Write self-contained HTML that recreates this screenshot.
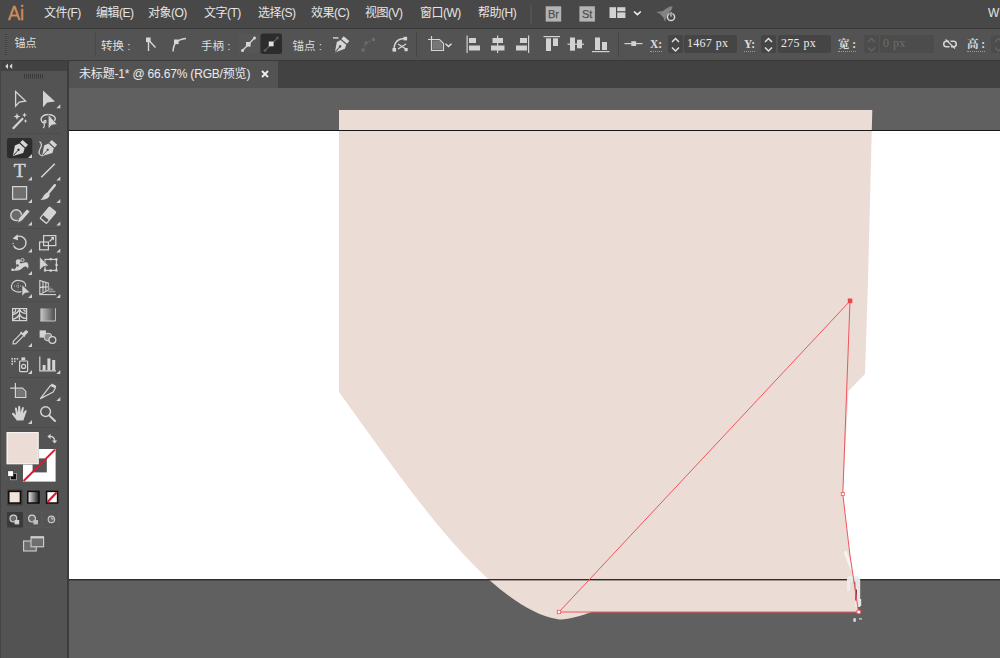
<!DOCTYPE html>
<html lang="zh-CN">
<head>
<meta charset="utf-8">
<title>Ai</title>
<style>
*{box-sizing:border-box;margin:0;padding:0}
html,body{width:1000px;height:658px;overflow:hidden;background:#535353}
body{position:relative;font-family:"Liberation Sans","Noto Sans CJK SC",sans-serif;font-size:12px;color:#e0e0e0}
svg{display:block;overflow:hidden}
#menubar{position:absolute;left:0;top:0;width:1000px;height:28px;background:#484848}
#menubar .mi{position:absolute;top:0;height:28px;line-height:27px;font-size:12px;color:#e4e4e4;white-space:nowrap;letter-spacing:-0.5px}
#menuline{position:absolute;left:0;top:28px;width:1000px;height:1px;background:#383838}
#ctrl{position:absolute;left:0;top:29px;width:1000px;height:31px;background:#535353}
#ctrl .t{position:absolute;top:0;height:30px;line-height:29px;font-size:12px;color:#dedede;white-space:nowrap}
#ctrl .lb{position:absolute;top:8px;height:15px;line-height:14px;font-size:11.5px;font-weight:bold;color:#dedede;white-space:nowrap;font-family:"Liberation Serif","Noto Serif CJK SC",serif;border-bottom:1px dotted #9a9a9a}
#ctrl .inp{position:absolute;top:6px;height:18px;background:#454545;border-radius:2px;font-family:"Liberation Serif",serif;font-size:12px;letter-spacing:0.25px;word-spacing:0.5px;line-height:17px;color:#ececec;padding-left:3px;white-space:nowrap}
#ctrl .spin{position:absolute;top:6px;height:18px;width:15px;background:#454545;border-radius:2px}
#ctrlline{position:absolute;left:0;top:60px;width:1000px;height:1px;background:#3a3a3a}
#tabbar{position:absolute;left:68px;top:61px;width:932px;height:27px;background:#424242}
#tab{position:absolute;left:1px;top:0;width:209px;height:27px;background:#535353;font-size:12px;line-height:26px;color:#ececec;white-space:nowrap;letter-spacing:-0.18px}
#canvas{position:absolute;left:69px;top:88px;width:931px;height:570px;background:#606060;overflow:hidden}
#tools{position:absolute;left:0;top:61px;width:69px;height:597px;background:#535353;border-left:1px solid #454545;border-right:2px solid #3c3c3c}
</style>
</head>
<body>
<div id="menubar">
  <div class="mi" style="left:8px;font-size:20px;color:#cf8d5c;letter-spacing:-0.2px;line-height:26px;-webkit-text-stroke:0.35px #cf8d5c;transform:scaleX(0.92);transform-origin:0 0">Ai</div>
  <div class="mi" style="left:44px">文件(F)</div>
  <div class="mi" style="left:96px">编辑(E)</div>
  <div class="mi" style="left:148px">对象(O)</div>
  <div class="mi" style="left:204px">文字(T)</div>
  <div class="mi" style="left:258px">选择(S)</div>
  <div class="mi" style="left:311px">效果(C)</div>
  <div class="mi" style="left:365px">视图(V)</div>
  <div class="mi" style="left:420px">窗口(W)</div>
  <div class="mi" style="left:478px">帮助(H)</div>
  <div class="mi" style="left:988px">W</div>
  <svg width="1000" height="28" viewBox="0 0 1000 28" style="position:absolute;left:0;top:0">
    <rect x="530.5" y="5" width="1" height="19" fill="#5c5c5c"/>
    <rect x="545.7" y="6.3" width="15.5" height="15.3" fill="#b4b4b4"/>
    <text x="553.5" y="18" font-family="Liberation Sans, sans-serif" font-size="11" fill="#505050" stroke="#505050" stroke-width="0.25" text-anchor="middle">Br</text>
    <rect x="579.4" y="6.3" width="15.5" height="15.3" fill="#b4b4b4"/>
    <text x="587.2" y="18" font-family="Liberation Sans, sans-serif" font-size="11" fill="#505050" stroke="#505050" stroke-width="0.25" text-anchor="middle">St</text>
    <rect x="609.5" y="7.2" width="6.5" height="10.8" fill="#d2d2d2"/>
    <rect x="617.2" y="7.2" width="8.2" height="4" fill="#d2d2d2"/>
    <rect x="617.2" y="12.4" width="8.2" height="5.6" fill="#d2d2d2"/>
    <path d="M634 11.5 L637.4 14.6 L640.8 11.5" fill="none" stroke="#f0f0f0" stroke-width="1.6"/>
    <g transform="translate(665.5,12.5) rotate(48)" fill="#848484"><path d="M0 -9.5 C3.2 -6 3.2 1 2.2 5 L-2.2 5 C-3.2 1 -3.2 -6 0 -9.5 Z"/><path d="M-2.6 0.5 L-6.5 6.5 L-2.4 5 Z M2.6 0.5 L6.5 6.5 L2.4 5 Z"/></g>
    <circle cx="671" cy="17" r="3.6" fill="none" stroke="#d8d8d8" stroke-width="1.5"/>
    <rect x="670" y="11.5" width="2" height="5.5" fill="#d8d8d8" stroke="#484848" stroke-width="0.8"/>
  </svg>
</div>
<div id="menuline"></div>
<div id="ctrl">
  <div class="t" style="left:14.5px;font-size:11px;top:0px">锚点</div>
  <div class="t" style="left:101px;font-size:11.5px;top:3px">转换 :</div>
  <div class="t" style="left:201px;font-size:11.5px;top:3px">手柄 :</div>
  <div class="t" style="left:292.5px;font-size:11.5px;top:3px">锚点 :</div>
  <div class="lb" style="left:650px">X:</div>
  <div class="spin" style="left:668px"></div>
  <div class="inp" style="left:684px;width:53px">1467 px</div>
  <div class="lb" style="left:744px">Y:</div>
  <div class="spin" style="left:761px"></div>
  <div class="inp" style="left:778px;width:53px">275 px</div>
  <div class="lb" style="left:838px">宽 :</div>
  <div class="spin" style="left:864px;background:#4c4c4c"></div>
  <div class="inp" style="left:880px;width:54px;background:#4c4c4c;color:#6e6e6e">0 px</div>
  <div class="lb" style="left:967px">高 :</div>
  <div class="spin" style="left:991px;background:#4c4c4c"></div>
  <svg width="1000" height="31" viewBox="0 29 1000 31" style="position:absolute;left:0;top:0">
    <!-- grip -->
    <g fill="#3e3e3e"><rect x="5" y="34" width="2" height="21"/></g>
    <g fill="#5a5a5a"><rect x="5" y="35" width="2" height="1"/><rect x="5" y="37" width="2" height="1"/><rect x="5" y="39" width="2" height="1"/><rect x="5" y="41" width="2" height="1"/><rect x="5" y="43" width="2" height="1"/><rect x="5" y="45" width="2" height="1"/><rect x="5" y="47" width="2" height="1"/><rect x="5" y="49" width="2" height="1"/><rect x="5" y="51" width="2" height="1"/><rect x="5" y="53" width="2" height="1"/></g>
    <rect x="95" y="32" width="1" height="25" fill="#494949"/>
    <!-- convert corner -->
    <g stroke="#d6d6d6" stroke-width="1.4" fill="none">
      <path d="M148.5 40 L148.5 51"/><path d="M148.5 40 L155.5 47.5"/>
    </g>
    <rect x="146" y="37.5" width="4.6" height="4.6" fill="#d6d6d6"/>
    <!-- convert smooth -->
    <path d="M173 51.5 C173.5 44 176 39.5 186 38.5" stroke="#d6d6d6" stroke-width="1.5" fill="none"/>
    <rect x="174" y="39.5" width="4.6" height="4.6" fill="#d6d6d6"/>
    <!-- handle btn 1 -->
    <rect x="238.5" y="34" width="20.5" height="19.5" rx="2" fill="#565656"/>
    <path d="M242.5 50.5 L254.5 38" stroke="#d6d6d6" stroke-width="1.3"/>
    <rect x="246" y="42" width="4.6" height="4.6" fill="#d6d6d6"/>
    <circle cx="242.5" cy="50.5" r="1.5" fill="#d6d6d6"/><circle cx="254.5" cy="38" r="1.5" fill="#d6d6d6"/>
    <!-- handle btn 2 selected -->
    <rect x="260.5" y="33.5" width="21.5" height="20.5" rx="2.5" fill="#2c2c2c"/>
    <path d="M265 50.5 L277.5 38" stroke="#5a5a5a" stroke-width="1.3"/>
    <circle cx="265" cy="50.5" r="1.4" fill="#5a5a5a"/><circle cx="277.5" cy="38" r="1.4" fill="#5a5a5a"/>
    <rect x="268.8" y="41.5" width="4.8" height="4.8" fill="#e0e0e0"/>
    <!-- remove anchor pen -->
    <g transform="translate(341.2,45) rotate(40) scale(1.15)" fill="#d6d6d6">
      <path d="M0 8.5 L-4.6 0.5 L-3.2 -3 L3.2 -3 L4.6 0.5 Z"/>
      <rect x="-3.2" y="-7.2" width="6.4" height="3.2"/>
      <path d="M0 8 L0 2" stroke="#535353" stroke-width="0.9"/><circle cx="0" cy="1.5" r="1.1" fill="#535353"/>
    </g>
    <rect x="333" y="37.2" width="5.5" height="1.4" fill="#d6d6d6"/>
    <!-- disabled -->
    <path d="M363 50 L366 43 L374 39.5" stroke="#6c6c6c" stroke-width="1.2" fill="none" stroke-dasharray="2 1.5"/>
    <rect x="364.5" y="41.5" width="3" height="3" fill="#6c6c6c"/><rect x="372" y="38" width="3" height="3" fill="#6c6c6c"/><rect x="361.5" y="48.5" width="3" height="3" fill="#6c6c6c"/>
    <!-- cut path -->
    <path d="M394 50 C394 42 398 38.5 405 38.5" stroke="#d6d6d6" stroke-width="1.4" fill="none"/>
    <rect x="392.5" y="48" width="3.6" height="3.6" fill="#d6d6d6"/><rect x="403.5" y="36.8" width="3.6" height="3.6" fill="#d6d6d6"/>
    <path d="M398 44 L406 49 M398 49 L406 44" stroke="#d6d6d6" stroke-width="1.3"/>
    <rect x="404.5" y="48" width="3.2" height="3.2" fill="#d6d6d6"/>
    <rect x="416" y="32" width="1" height="25" fill="#464646"/>
    <!-- isolate -->
    <path d="M431.5 36 L431.5 50.5 L443.5 50.5 L443.5 43.5 L439.5 39.5 L428 39.5" stroke="#d6d6d6" stroke-width="1.2" fill="none"/>
    <path d="M432.5 40.5 L439 40.5 L442.5 44 L442.5 49.5 L432.5 49.5 Z" fill="#777"/>
    <path d="M445.5 43.8 L448.5 46.6 L451.5 43.8" stroke="#e2e2e2" stroke-width="1.4" fill="none"/>
    <!-- align left -->
    <g fill="#d2d2d2">
      <rect x="466.5" y="35.5" width="1.2" height="17.5"/><rect x="469" y="38" width="7" height="5"/><rect x="469" y="45.5" width="11" height="5"/>
      <rect x="497" y="35.5" width="1.2" height="17.5"/><rect x="492.5" y="38" width="10.5" height="5"/><rect x="491" y="45.5" width="13.5" height="5"/>
      <rect x="528" y="35.5" width="1.2" height="17.5"/><rect x="520" y="38" width="7" height="5"/><rect x="516" y="45.5" width="11" height="5"/>
      <rect x="543.5" y="36" width="16.5" height="1.2"/><rect x="546" y="38.3" width="5" height="12.7"/><rect x="553" y="38.3" width="5" height="7.7"/>
      <rect x="567.5" y="43.6" width="16.5" height="1.2"/><rect x="570" y="37.5" width="5" height="13.2"/><rect x="577" y="39.7" width="5" height="8.6"/>
      <rect x="592" y="51" width="17.5" height="1.2"/><rect x="595" y="37.5" width="5" height="12.5"/><rect x="602" y="42" width="5" height="8"/>
    </g>
    <rect x="618" y="32" width="1" height="25" fill="#464646"/>
    <rect x="624.5" y="43" width="18" height="1.2" fill="#d2d2d2"/><rect x="631.3" y="41.2" width="4.8" height="4.8" fill="#d2d2d2"/>
    <!-- spinners -->
    <g fill="none" stroke="#e0e0e0" stroke-width="1.5">
      <path d="M672 42 L675.5 38.5 L679 42 M672 47.5 L675.5 51 L679 47.5"/>
      <path d="M765 42 L768.5 38.5 L772 42 M765 47.5 L768.5 51 L772 47.5"/>
    </g>
    <g fill="none" stroke="#636363" stroke-width="1.5">
      <path d="M868 42 L871.5 38.5 L875 42 M868 47.5 L871.5 51 L875 47.5"/>
      <path d="M995 42 L998.5 38.5 L1002 42 M995 47.5 L998.5 51 L1002 47.5"/>
    </g>
    <!-- broken link -->
    <g fill="none" stroke="#d6d6d6" stroke-width="1.5">
      <path d="M949 41.2 L946.5 41.2 A2.8 2.8 0 0 0 946.5 46.8 L949.5 46.8"/>
      <path d="M950.5 41.2 L953.5 41.2 A2.8 2.8 0 0 1 953.5 46.8 L951 46.8"/>
      <path d="M945.5 39.5 L955 48.5" stroke-width="1.3"/>
    </g>
  </svg>
</div>
<div id="ctrlline"></div>
<div id="tabbar"><div id="tab"><span style="position:absolute;left:10px">未标题-1* @ 66.67% (RGB/预览)</span>
<svg width="10" height="10" viewBox="0 0 10 10" style="position:absolute;left:191px;top:8px"><path d="M2 2 L8 8 M8 2 L2 8" stroke="#f0f0f0" stroke-width="1.8"/></svg></div></div>
<div id="canvas">
<svg width="931" height="570" viewBox="69 88 931 570" style="position:absolute;left:0;top:0">
  <rect x="69" y="131" width="931" height="448" fill="#ffffff"/>
  <path d="M339 110 L872.3 110 L868 280 L865 374 L848.5 391 L842.8 494 Q849 555 858.5 612 L592 612 C580 616 566 620.5 558 619.3 C486.2 608 399.2 474.7 339 392 Z" fill="#ecdcd6"/>
  <rect x="69" y="130" width="931" height="1" fill="#181818"/>
  <rect x="69" y="579" width="931" height="1.4" fill="#2c2c2c"/>
  <!-- pen cursor ghost -->
  <g>
    <path d="M843.6 552 L846.4 550.6 L853.4 569 L850.6 570.4 Z" fill="#f7f4f2" opacity="0.95"/>
    <path d="M847 591 L847 579.5 Q847 576 850.5 576 L856.5 576 Q860.2 576 860.2 580 L860.2 607 L855.4 607 L855.4 583 Q855.4 581.6 854 581.6 L851.4 581.6 Q850.2 581.6 850.2 583 L850.2 591 Z" fill="#ededec" opacity="0.95"/>
    <rect x="855.2" y="589.5" width="1.8" height="11" fill="#8c3a40"/>
    <rect x="858.6" y="599" width="2.6" height="7" fill="#e6e6e6"/>
    <rect x="853.4" y="618.2" width="2.4" height="3.6" fill="#dcdcdc"/>
    <rect x="859" y="618" width="3" height="1.6" fill="#b8b8b8"/>
  </g>
  <g fill="none" stroke="#f0555c" stroke-width="1">
    <path d="M559 612 L850 301 L842.8 494 Q849 555 858.5 612 Z"/>
  </g>
  <rect x="847.8" y="298.5" width="4.5" height="4.7" fill="#ee4450"/>
  <rect x="841.3" y="492.4" width="3" height="3" fill="#fff" stroke="#f0555c" stroke-width="0.8"/>
  <rect x="557.3" y="610.3" width="3.4" height="3.4" fill="#fff" stroke="#f0555c" stroke-width="0.8"/>
  <rect x="857" y="610.3" width="3.4" height="3.4" fill="#fff" stroke="#f0555c" stroke-width="0.8"/>
</svg>
</div>
<div id="tools">
<svg width="69" height="597" viewBox="0 61 69 597" style="position:absolute;left:-1px;top:0">
  <!-- header -->
  <rect x="1" y="61" width="66" height="10" fill="#424242"/>
  <path d="M8 63.5 L5.2 66.2 L8 69 Z M12.2 63.5 L9.4 66.2 L12.2 69 Z" fill="#d8d8d8"/>
  <g fill="#3a3a3a">
    <rect x="24" y="74" width="1" height="4.5"/><rect x="26" y="74" width="1" height="4.5"/><rect x="28" y="74" width="1" height="4.5"/><rect x="30" y="74" width="1" height="4.5"/><rect x="32" y="74" width="1" height="4.5"/><rect x="34" y="74" width="1" height="4.5"/><rect x="36" y="74" width="1" height="4.5"/><rect x="38" y="74" width="1" height="4.5"/><rect x="40" y="74" width="1" height="4.5"/><rect x="42" y="74" width="1" height="4.5"/>
  </g>
  <!-- separators -->
  <g fill="#4c4c4c">
    <rect x="7" y="133" width="54" height="1"/><rect x="7" y="228" width="54" height="1"/><rect x="7" y="301" width="54" height="1"/><rect x="7" y="350" width="54" height="1"/><rect x="7" y="377" width="54" height="1"/><rect x="7" y="427" width="54" height="1"/>
  </g>
  <!-- flyout corner triangles -->
  <g fill="#cfcfcf">
    <path d="M60.3 104.3 L60.3 108.3 L56.3 108.3 Z"/>
    <path d="M32 154 L32 158 L28 158 Z"/>
    <path d="M32 176.5 L32 180.5 L28 180.5 Z"/><path d="M60.3 176.5 L60.3 180.5 L56.3 180.5 Z"/>
    <path d="M32 199 L32 203 L28 203 Z"/><path d="M60.3 199 L60.3 203 L56.3 203 Z"/>
    <path d="M32 221.5 L32 225.5 L28 225.5 Z"/><path d="M60.3 221.5 L60.3 225.5 L56.3 225.5 Z"/>
    <path d="M32 248.5 L32 252.5 L28 252.5 Z"/><path d="M60.3 248.5 L60.3 252.5 L56.3 252.5 Z"/>
    <path d="M32 271 L32 275 L28 275 Z"/>
    <path d="M32 294 L32 298 L28 298 Z"/><path d="M60.3 294 L60.3 298 L56.3 298 Z"/>
    <path d="M32 343 L32 347 L28 347 Z"/>
    <path d="M32 370 L32 374 L28 374 Z"/><path d="M60.3 370 L60.3 374 L56.3 374 Z"/>
    <path d="M60.3 397 L60.3 401 L56.3 401 Z"/>
    <path d="M32 420 L32 424 L28 424 Z"/>
  </g>
  <!-- 1 selection (hollow) -->
  <path d="M15.6 91.5 L15.6 106 L19.3 102 L25.6 101 Z" fill="none" stroke="#d4d4d4" stroke-width="1.3" stroke-linejoin="miter"/>
  <!-- 2 direct selection (filled) -->
  <path d="M43 90.5 L43 107.3 L47.3 102.6 L55 101.6 Z" fill="#d4d4d4"/>
  <!-- 3 magic wand -->
  <path d="M12.8 128.8 L23 118.2" stroke="#d4d4d4" stroke-width="2.2"/>
  <g fill="#d4d4d4">
    <path d="M17 113 L17.9 115.6 L20.5 116.5 L17.9 117.4 L17 120 L16.1 117.4 L13.5 116.5 L16.1 115.6 Z"/>
    <path d="M24.5 112.5 L25.2 114.3 L27 115 L25.2 115.7 L24.5 117.5 L23.8 115.7 L22 115 L23.8 114.3 Z"/>
    <path d="M25.5 119 L26.1 120.4 L27.5 121 L26.1 121.6 L25.5 123 L24.9 121.6 L23.5 121 L24.9 120.4 Z"/>
  </g>
  <!-- 4 lasso -->
  <g fill="none" stroke="#d4d4d4" stroke-width="1.3">
    <path d="M54.5 121 C57 117 53 114.5 48 114.5 C43 114.5 40 117.5 41.5 121 C42.5 123.5 46 123.5 46 121.5 C46 119.5 43 120.5 44 123.5 C44.8 125.5 44 127.5 43 128"/>
  </g>
  <path d="M48.3 114.5 L48.3 129 L51.6 125.2 L57 124.2 Z" fill="#d4d4d4" stroke="#535353" stroke-width="0.6"/>
  <!-- 5 pen (selected) -->
  <rect x="7" y="138" width="25.3" height="20.3" rx="2.5" fill="#2d2d2d"/>
  <path d="M32 154 L32 158 L28 158 Z" fill="#cfcfcf"/>
  <g transform="translate(19.6,148.6) rotate(42)">
    <path d="M0 10 L-5.6 0.8 L-3.6 -3.6 L3.6 -3.6 L5.6 0.8 Z" fill="#d8d8d8"/>
    <rect x="-3.6" y="-8.4" width="7.2" height="3.6" fill="#d8d8d8"/>
    <path d="M0 9 L0 2.5" stroke="#2d2d2d" stroke-width="0.9"/><circle cx="0" cy="1.6" r="1.2" fill="#2d2d2d"/>
  </g>
  <!-- 6 curvature -->
  <g transform="translate(48.8,148.6) rotate(42)">
    <path d="M0 10 L-5.6 0.8 L-3.6 -3.6 L3.6 -3.6 L5.6 0.8 Z" fill="#d4d4d4"/>
    <rect x="-3.6" y="-8.4" width="7.2" height="3.6" fill="#d4d4d4"/>
    <path d="M0 9 L0 2.5" stroke="#535353" stroke-width="0.9"/><circle cx="0" cy="1.6" r="1.2" fill="#535353"/>
  </g>
  <path d="M39.5 141.5 C42.5 143.5 41.5 146.5 40 149 C38 152.5 38.8 155.5 43 155.8" fill="none" stroke="#d4d4d4" stroke-width="1.2"/>
  <!-- 7 type -->
  <text x="19.6" y="177" font-family="Liberation Serif, serif" font-size="19.5" fill="#d4d4d4" stroke="#d4d4d4" stroke-width="0.5" text-anchor="middle">T</text>
  <!-- 8 line -->
  <path d="M41.3 177.2 L54.8 163.8" stroke="#d4d4d4" stroke-width="1.6"/>
  <!-- 9 rectangle -->
  <rect x="12.6" y="186.6" width="14" height="12.6" fill="#6f6f6f" stroke="#d4d4d4" stroke-width="1.2"/>
  <!-- 10 paintbrush -->
  <path d="M54.8 185.2 L48.4 193" stroke="#d4d4d4" stroke-width="2.6" stroke-linecap="round"/>
  <path d="M47.3 192.5 L49.8 194.8 C49.5 198 46 200.2 40.3 200 C43.5 198 43 194.5 47.3 192.5 Z" fill="#d4d4d4"/>
  <!-- 11 shaper -->
  <circle cx="16.2" cy="215.2" r="5.4" fill="#6a6a6a" stroke="#d4d4d4" stroke-width="1.4"/>
  <path d="M17.4 223.2 L18.8 218.2 L27 209 L30 211.6 L22 220.8 Z" fill="#d4d4d4" stroke="#535353" stroke-width="0.7"/>
  <!-- 12 eraser -->
  <g transform="translate(48,215.2) rotate(40)">
    <rect x="-4.8" y="-8" width="9.6" height="16" rx="1.4" fill="#d4d4d4"/>
    <rect x="-3.6" y="3.2" width="7.2" height="3.4" fill="#535353"/>
  </g>
  <!-- 13 rotate -->
  <path d="M17 236.6 A6.6 6.6 0 1 1 14 246.5" fill="none" stroke="#d4d4d4" stroke-width="1.4"/>
  <path d="M14 246.5 A6.6 6.6 0 0 1 13.4 241.5" fill="none" stroke="#d4d4d4" stroke-width="1.2" stroke-dasharray="1.2 1.2"/>
  <path d="M12.6 238.6 L17.6 234.2 L18 240.2 Z" fill="#d4d4d4"/>
  <!-- 14 scale -->
  <rect x="39.6" y="242" width="8.8" height="7.8" fill="none" stroke="#d4d4d4" stroke-width="1.2"/>
  <rect x="43.6" y="235.6" width="12.2" height="10" fill="none" stroke="#d4d4d4" stroke-width="1.2"/>
  <path d="M49.5 241.5 L53 238" stroke="#d4d4d4" stroke-width="1.2"/><path d="M54 237 L54 240.4 L50.6 237 Z" fill="#d4d4d4"/>
  <!-- 15 width -->
  <path d="M12 269.5 C15 270.5 17.5 267 16 263.5 C15 260.5 17 258.5 19.5 259.5 C21 260 21 262 19.5 262.5 C22 265 24 261 27 262.5 C29 263.5 28.5 267 28 269 C26.5 265 24 266.5 22 268.5 C19 271 15 271.5 12 269.5 Z" fill="#d4d4d4"/>
  <circle cx="17.5" cy="265.5" r="1.2" fill="#535353"/><rect x="11.4" y="268.6" width="2.4" height="2.4" fill="#d4d4d4"/><circle cx="22.5" cy="260" r="1.6" fill="none" stroke="#d4d4d4" stroke-width="0.9"/>
  <!-- 16 free transform -->
  <rect x="45" y="259.4" width="11.4" height="11" fill="none" stroke="#d4d4d4" stroke-width="1.1"/>
  <g fill="#d4d4d4"><rect x="55.3" y="258.3" width="2.2" height="2.2"/><rect x="55.3" y="269.3" width="2.2" height="2.2"/><rect x="43.9" y="269.3" width="2.2" height="2.2"/><rect x="55.5" y="263.8" width="2.2" height="2.2"/><rect x="49.6" y="258.1" width="2.2" height="2.2"/><rect x="49.6" y="269.5" width="2.2" height="2.2"/></g>
  <path d="M39.6 256.8 L39.6 270.4 L43 266.8 L48.6 265.8 Z" fill="#d4d4d4" stroke="#535353" stroke-width="0.7"/>
  <!-- 17 shape builder -->
  <path d="M21.5 291.6 C17 293 11.2 290.5 11.4 286.2 C11.6 282 16 279.8 19.5 280.6 C23.5 280.6 26.4 283.2 25.6 286.6" fill="none" stroke="#d4d4d4" stroke-width="1.2"/>
  <path d="M14 286 L21 286 M18 283 L18 289.5" stroke="#c0c0c0" stroke-width="0.9" stroke-dasharray="1 1"/>
  <path d="M22 284.8 L22 296.2 L25 293.2 L30 292.4 Z" fill="#d4d4d4" stroke="#535353" stroke-width="0.6"/>
  <!-- 18 perspective grid -->
  <path d="M39.8 280.4 L39.8 294.4 L48.4 290.2 L48.4 283.2 Z M43 281.4 L43 292.8 M45.8 282.4 L45.8 291.4 M39.8 287.4 L48.4 286.8" fill="none" stroke="#d4d4d4" stroke-width="1.1"/>
  <path d="M48.4 284 L56 292.8 L48.4 292.8 Z" fill="#7a7a7a" opacity="0.55"/><path d="M48.4 289.2 L53 289.2 M48.4 291.4 L55.4 291.4" stroke="#b4b4b4" stroke-width="0.8"/>
  <path d="M39.8 294.6 L56 294.6" stroke="#d4d4d4" stroke-width="1.1"/>
  <!-- 19 mesh -->
  <rect x="12.6" y="308.6" width="14" height="12" fill="none" stroke="#d4d4d4" stroke-width="1.2"/>
  <path d="M19.4 309 C20.4 313 18.6 317 19.6 320.5 M13 314.6 C15.5 314 18 312 19.6 309.6 C21 312 23.5 313.6 26.4 313.4 M13 319.4 C15.5 318.8 18 317 19.6 314.4 C21 317 23.5 318.6 26.4 318.2 M15.4 309.2 C16 310.6 15.4 312 13.2 312.6 M24 309.2 C23.6 310.4 24.6 311.4 26.4 311.2" fill="none" stroke="#d4d4d4" stroke-width="1.25"/>
  <!-- 20 gradient -->
  <defs><linearGradient id="gr1" x1="0" x2="1" y1="0" y2="0"><stop offset="0" stop-color="#c8c8c8"/><stop offset="1" stop-color="#4a4a4a"/></linearGradient>
  <linearGradient id="gr2" x1="0" x2="1" y1="0" y2="0"><stop offset="0" stop-color="#f0f0f0"/><stop offset="1" stop-color="#1a1a1a"/></linearGradient></defs>
  <rect x="40.4" y="308.4" width="14.8" height="12.4" fill="url(#gr1)"/>
  <path d="M40.2 321 L55.4 321 L55.4 308.2" fill="none" stroke="#d4d4d4" stroke-width="0.9"/>
  <!-- 21 eyedropper -->
  <path d="M13 343.8 L13.4 341.2 L21.4 333.2 L23.8 335.6 L15.8 343.6 Z" fill="none" stroke="#d4d4d4" stroke-width="1.2"/>
  <path d="M20.6 332 L25 336.4" stroke="#d4d4d4" stroke-width="1.6"/>
  <path d="M22.4 333.6 L25.4 330.4 A1.8 1.8 0 0 1 27.8 332.8 L24.6 335.8 Z" fill="#d4d4d4"/>
  <!-- 22 blend -->
  <rect x="39.6" y="330.4" width="6.4" height="7.2" fill="#d4d4d4"/>
  <circle cx="48" cy="337" r="3.9" fill="#8a8a8a" stroke="#d4d4d4" stroke-width="1"/>
  <circle cx="52.4" cy="340" r="3.4" fill="#535353" stroke="#d4d4d4" stroke-width="1.3"/>
  <!-- 23 symbol sprayer -->
  <rect x="19.6" y="361" width="8" height="10.6" rx="0.8" fill="none" stroke="#d4d4d4" stroke-width="1.2"/>
  <rect x="21.4" y="357.4" width="3.8" height="3" fill="#d4d4d4"/>
  <circle cx="23.6" cy="366.4" r="2" fill="none" stroke="#d4d4d4" stroke-width="1.2"/>
  <g fill="#d4d4d4"><rect x="11.4" y="358" width="1.6" height="1.6"/><rect x="14" y="358" width="1.6" height="1.6"/><rect x="16.6" y="358" width="1.6" height="1.6"/><rect x="11.4" y="360.6" width="1.6" height="1.6"/><rect x="14" y="360.6" width="1.6" height="1.6"/><rect x="11.4" y="363.2" width="1.6" height="1.6"/></g>
  <!-- 24 graph -->
  <path d="M39.8 356.4 L39.8 370.8 L56 370.8" fill="none" stroke="#d4d4d4" stroke-width="1.2"/>
  <g fill="#d4d4d4"><rect x="42.6" y="365" width="3" height="5.4"/><rect x="47.4" y="358.4" width="3" height="12"/><rect x="52.2" y="360" width="3" height="10.4"/></g>
  <!-- 25 artboard -->
  <path d="M15.4 383 L15.4 397.4 L25.8 397.4 L25.8 391.4 L22.6 388.2 L10.2 388.2" fill="none" stroke="#d4d4d4" stroke-width="1.2"/>
  <path d="M16.2 389 L22.2 389 L25 391.8 L25 396.6 L16.2 396.6 Z" fill="#757575"/>
  <!-- 26 slice -->
  <path d="M40.4 398.6 L50.6 385.4 L55.4 387.8 L53.2 392 Z" fill="none" stroke="#d4d4d4" stroke-width="1.2" stroke-linejoin="round"/>
  <path d="M50.6 385.4 L52 383.6 L56.4 386 L55.4 387.8 Z" fill="#d4d4d4"/>
  <!-- 27 hand -->
  <path d="M16.8 420.6 C15.2 418 13.4 415.8 12.2 414.4 C11.4 413.2 12.8 412.2 13.8 413 L16 415.2 L15 408.8 C14.8 407.4 16.6 407.2 16.9 408.4 L18 412.8 L18.2 406.8 C18.3 405.5 20.1 405.5 20.2 406.8 L20.6 412.6 L22 407.8 C22.4 406.6 24 407 23.8 408.2 L23 413.6 L25 410.6 C25.8 409.6 27 410.4 26.6 411.4 C25.6 414 24.6 417 23.4 420.6 Z" fill="#d4d4d4"/>
  <!-- 28 zoom -->
  <circle cx="45.6" cy="411.6" r="4.9" fill="none" stroke="#d4d4d4" stroke-width="1.4"/>
  <path d="M49.4 415.6 L55 421" stroke="#d4d4d4" stroke-width="2" stroke-linecap="round"/>
  <!-- fill/stroke swatches -->
  <rect x="23" y="449" width="32.6" height="32.6" fill="#ffffff"/>
  <rect x="32.6" y="458.4" width="14.2" height="14" fill="#545454"/>
  <path d="M23.6 481 L55 449.6" stroke="#e0172d" stroke-width="2"/>
  <rect x="6" y="431.6" width="33" height="33" fill="#535353"/>
  <rect x="7" y="432.6" width="31.2" height="31.2" fill="#ecdcd6" stroke="#ffffff" stroke-width="1"/>
  <!-- swap -->
  <path d="M49.6 436.4 C53.6 436.4 54.6 438 54.6 441" fill="none" stroke="#d4d4d4" stroke-width="1.3"/>
  <path d="M47.4 436.4 L50.6 433.8 L50.6 439 Z M54.6 443.6 L52 440.4 L57.2 440.4 Z" fill="#d4d4d4"/>
  <!-- default -->
  <rect x="10.4" y="473.4" width="6" height="6.4" fill="#111" stroke="#d0d0d0" stroke-width="0.6"/>
  <rect x="7.8" y="470.8" width="5.6" height="5.6" fill="#ffffff" stroke="#222" stroke-width="0.6"/>
  <!-- color mode -->
  <rect x="7" y="489.4" width="15.6" height="16" rx="1" fill="#3e3e3e"/>
  <rect x="8.8" y="491.4" width="11.6" height="11.6" fill="#f1e2dc" stroke="#0e0e0e" stroke-width="1.5"/>
  <rect x="27.8" y="491.4" width="11.2" height="11.6" fill="url(#gr2)" stroke="#0e0e0e" stroke-width="1.5"/>
  <rect x="46.6" y="491.4" width="11" height="11.6" fill="#ffffff" stroke="#0e0e0e" stroke-width="1.5"/>
  <path d="M47.6 502 L56.6 492.4" stroke="#e0172d" stroke-width="2.2"/>
  <!-- draw modes -->
  <rect x="7" y="512" width="16" height="15.6" rx="1" fill="#3a3a3a"/>
  <rect x="25" y="512" width="16.4" height="15.6" fill="none" stroke="#5c5c5c" stroke-width="0.6"/>
  <rect x="43" y="512" width="16.4" height="15.6" fill="none" stroke="#5c5c5c" stroke-width="0.6"/>
  <circle cx="13.4" cy="518.6" r="3.4" fill="#6a6a6a" stroke="#d4d4d4" stroke-width="1.2"/><rect x="14.6" y="520" width="4.6" height="4.4" fill="#d4d4d4"/>
  <circle cx="32" cy="518.6" r="3.4" fill="#6a6a6a" stroke="#d4d4d4" stroke-width="1.2"/><rect x="33.4" y="520" width="4.6" height="4.4" fill="#bdbdbd"/>
  <circle cx="51.4" cy="519.4" r="3.2" fill="#6a6a6a" stroke="#c6c6c6" stroke-width="1.2"/><path d="M51.4 519.4 L51.4 516.4 L54 519.4 Z" fill="#c6c6c6"/>
  <!-- screen mode -->
  <rect x="23.6" y="541" width="12.6" height="10" fill="#6e6e6e" stroke="#cfcfcf" stroke-width="1.1"/>
  <rect x="31" y="536.8" width="12.6" height="10" fill="#6e6e6e" stroke="#cfcfcf" stroke-width="1.1"/>
  <rect x="31" y="536.6" width="12.6" height="1.8" fill="#cfcfcf"/>
</svg>
</div>
</body>
</html>
